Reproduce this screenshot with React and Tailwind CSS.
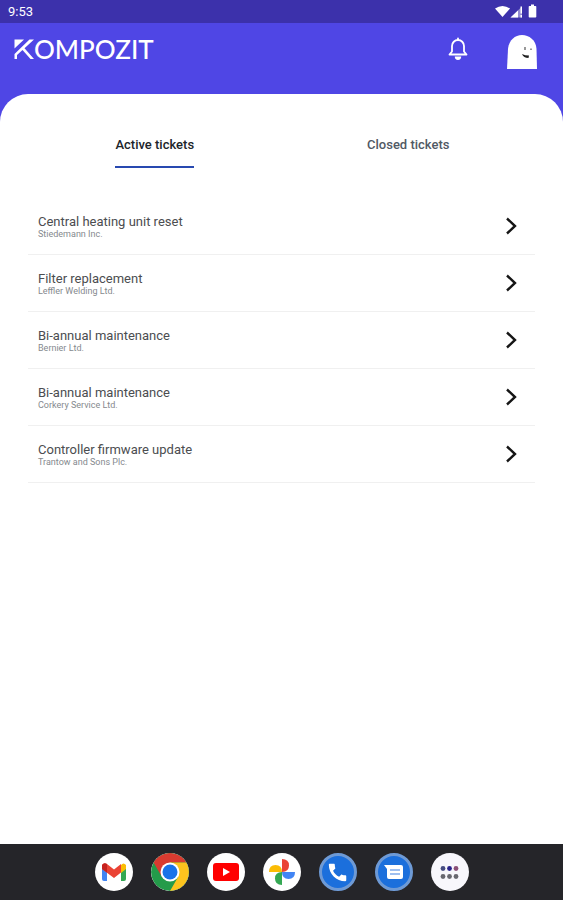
const tickets = [
  ["Central heating unit reset", "Stiedemann Inc."],
  ["Filter replacement", "Leffler Welding Ltd."],
  ["Bi-annual maintenance", "Bernier Ltd."],
  ["Bi-annual maintenance", "Corkery Service Ltd."],
  ["Controller firmware update", "Trantow and Sons Plc."],
];

function StatusBar() {
  return (
    <div className="flex h-[23px] items-center justify-between bg-[#3c31ab] pr-6 pl-2 text-white">
      <span className="text-[13px] leading-6">9:53</span>
      <svg className="h-4 w-11" viewBox="0 0 44 16" fill="currentColor" aria-hidden="true">
        <path d="M0 4.500Q7.500-.5 15 4.500L7.500 13Z" />
        <path d="M15.500 13.500 27 2.500V13.500Z" opacity=".45" />
        <path d="M15.500 13.500 23 6.500V13.500Z" />
        <path d="M25.500 2.500H27v7h-1.500zM25.500 11H27v2.500h-1.500z" />
        <path d="M36 .5h3V2h1.500q.8 0 .8.8v9.900q0 .8-.8.8h-6q-.8 0-.8-.8V2.800q0-.8.8-.8H36Z" />
      </svg>
    </div>
  );
}

function Logo() {
  return (
    <h1 className="flex h-5 items-center text-white" aria-label="Kompozit">
      <svg className="h-5 w-5" viewBox="0 0 20 20" fill="none" aria-hidden="true">
        <path d="M.5.5H10L.5 9.500Z" fill="currentColor" />
        <path d="M20 .5H15.500L.5 15V20H3V16L8.500 11 16.500 20H20L10.500 9.200Z" fill="currentColor" />
      </svg>
      <span className="font-['Lato',sans-serif] text-[26px] leading-5 font-medium">OMPOZIT</span>
    </h1>
  );
}

function Header() {
  return (
    <header className="flex h-[71px] items-start justify-between px-3.5 pt-3">
      <div className="pt-1">
        <Logo />
      </div>
      <div className="flex gap-9 pr-[11px]">
        <button type="button" aria-label="Notifications" className="mt-0.5 flex h-6 w-6 justify-center text-white">
          <svg className="h-6 w-6" viewBox="0 0 24 24" fill="none" stroke="currentColor" strokeWidth="1.800" strokeLinejoin="round" strokeLinecap="round">
            <path d="M3.500 17.500 6 14.500V9a6 6 0 0 1 12 0v5.500l2.500 3Z" />
            <path d="M12 1.500v1.500" />
            <path d="M8.800 19.500h6.400a3.200 3.500 0 0 1-6.400 0Z" fill="currentColor" stroke="none" />
          </svg>
        </button>
        <button type="button" aria-label="Profile" className="h-[34px] w-8">
          <svg className="h-[34px] w-8" viewBox="0 0 32 34" fill="none">
            <path d="M1 34 2 14C3 5 9 0 16 0s14 5 14.500 14L31 34Z" fill="#fff" />
            <path d="M19 12v3M25 13.500v1.500" stroke="#555" strokeWidth="1.200" />
            <path d="M16 19q3 1.500 7 1.500l-.5 2.500q-5 0-6.500-4Z" fill="#222" />
          </svg>
        </button>
      </div>
    </header>
  );
}

function Tabs() {
  return (
    <nav className="grid grid-cols-2 justify-items-center text-[13px] leading-5 font-medium" role="tablist">
      <button type="button" role="tab" aria-selected="true" className="h-[33px] border-b-2 border-[#2849b0] pb-[11px] text-[#20242a]">
        Active tickets
      </button>
      <button type="button" role="tab" aria-selected="false" className="h-[33px] border-b-2 border-transparent pb-[11px] text-[#515964]">
        Closed tickets
      </button>
    </nav>
  );
}

function Ticket({ title, company }) {
  return (
    <li className="border-b border-[#f0f0f0]">
      <button type="button" className="flex h-14 w-full items-center justify-between pr-[18px] pl-2.5 text-left">
        <span>
          <span className="block text-[13px] leading-4 text-[#4b4d50]">{title}</span>
          <span className="block text-[9px] leading-[9px] text-[#85898e]">{company}</span>
        </span>
        <svg className="h-[18px] w-3" viewBox="0 0 12 18" fill="none" stroke="#151515" strokeWidth="2.400" aria-hidden="true">
          <path d="m2 1.500 8 7.500-8 7.500" />
        </svg>
      </button>
    </li>
  );
}

function Gmail() {
  return (
    <svg className="h-6 w-7" viewBox="0 0 28 24" aria-hidden="true">
      <path d="M2 6h5v15H4q-2 0-2-2Z" fill="#4285f4" />
      <path d="M21 6h5v13q0 2-2 2h-3Z" fill="#34a853" />
      <path d="M21 5q2.500-3 5 0v4l-5 4Z" fill="#fbbc04" />
      <path d="M2 5q2-3 5-1l7 5.500L21 4v8.500L14 18 2 9Z" fill="#ea4335" />
      <path d="M2 5q2-3 5-1v8.500L2 9Z" fill="#c5221f" />
    </svg>
  );
}

function Chrome() {
  return (
    <svg className="h-[38px] w-[38px]" viewBox="0 0 38 38" aria-hidden="true">
      <circle cx="19" cy="19" r="19" fill="#249b4a" />
      <path d="M2.600 9.500A19 19 0 0 1 35.400 9.500H19L10.800 23.700Z" fill="#d93b30" />
      <path d="M19 9.500H35.400A19 19 0 0 1 19 38L27.200 23.700Z" fill="#fcc31e" />
      <circle cx="19" cy="19" r="9.500" fill="#fff" />
      <circle cx="19" cy="19" r="7.500" fill="#1a73e8" />
    </svg>
  );
}

function YouTube() {
  return (
    <svg className="h-[18px] w-[26px]" viewBox="0 0 26 18" aria-hidden="true">
      <rect width="26" height="18" rx="3" fill="#f00" />
      <path d="m10 5 7 4-7 4Z" fill="#fff" />
    </svg>
  );
}

function Photos() {
  return (
    <svg className="h-[26px] w-[26px]" viewBox="0 0 26 26" aria-hidden="true">
      <path d="M13 0q7 0 7 6.500T13 13Z" fill="#ea4335" />
      <path d="M26 13q0 7-6.500 7T13 13Z" fill="#4285f4" />
      <path d="M13 26q-7 0-7-6.500T13 13Z" fill="#34a853" />
      <path d="M0 13q0-7 6.500-7T13 13Z" fill="#fbbc04" />
    </svg>
  );
}

function Phone() {
  return (
    <svg className="h-[22px] w-[22px] shrink-0" viewBox="0 0 24 24" fill="#fff" aria-hidden="true">
      <path d="M20 15.500c-1.300 0-2.500-.2-3.600-.6-.4-.1-.8 0-1 .2l-2.200 2.200c-2.900-1.400-5.200-3.700-6.600-6.600L8.800 8.500c.3-.3.4-.7.200-1C8.700 6.400 8.500 5.200 8.500 4c0-.5-.5-1-1-1H3c-.5 0-1 .5-1 1 0 9.900 8.100 18 18 18 .5 0 1-.5 1-1v-4.500c0-.5-.5-1-1-1Z" />
    </svg>
  );
}

function Messages() {
  return (
    <svg className="h-4 w-5" viewBox="0 0 20 16" aria-hidden="true">
      <path d="M0 1h17q2 0 2 2v10q0 2-2 2H5q-2 0-2-2V5Z" fill="#fff" />
      <path d="M6 6h10M6 10h10" stroke="#7fabeb" strokeWidth="1.500" />
    </svg>
  );
}

function AppGrid() {
  return (
    <svg className="h-[13px] w-[19px]" viewBox="0 0 19 13" aria-hidden="true">
      <circle cx="3" cy="2.500" r="2.400" fill="#454c82" />
      <circle cx="9.500" cy="2.500" r="2.400" fill="#28228c" />
      <circle cx="16" cy="2.500" r="2.400" fill="#8b4f77" />
      <circle cx="3" cy="10.500" r="2.400" fill="#686870" />
      <circle cx="9.500" cy="10.500" r="2.400" fill="#686870" />
      <circle cx="16" cy="10.500" r="2.400" fill="#686870" />
    </svg>
  );
}

const apps = [
  ["Gmail", Gmail, "bg-white"],
  ["Chrome", Chrome, "bg-white"],
  ["YouTube", YouTube, "bg-white"],
  ["Photos", Photos, "bg-white"],
  ["Phone", Phone, "border-[3px] border-[#6e9ad5] bg-[#1b6fdc]"],
  ["Messages", Messages, "border-[3px] border-[#6e9ad5] bg-[#1b6fdc]"],
  ["All apps", AppGrid, "bg-[#f8f7fc]"],
];

function Dock() {
  return (
    <footer className="flex h-14 items-center justify-center gap-[18px] bg-[#252529]">
      {apps.map(([name, Icon, style]) => (
        <button key={name} type="button" aria-label={name} className={`flex h-[38px] w-[38px] items-center justify-center overflow-hidden rounded-full ${style}`}>
          <Icon />
        </button>
      ))}
    </footer>
  );
}

export default function App() {
  return (
    <div className="flex min-h-screen flex-col bg-[#4f46e5] font-['Roboto',sans-serif]">
      <StatusBar />
      <Header />
      <main className="flex-1 rounded-t-[28px] bg-white px-7 pt-[41px]">
        <Tabs />
        <ul className="mt-[30px]">
          {tickets.map(([title, company], i) => (
            <Ticket key={i} title={title} company={company} />
          ))}
        </ul>
      </main>
      <Dock />
    </div>
  );
}
